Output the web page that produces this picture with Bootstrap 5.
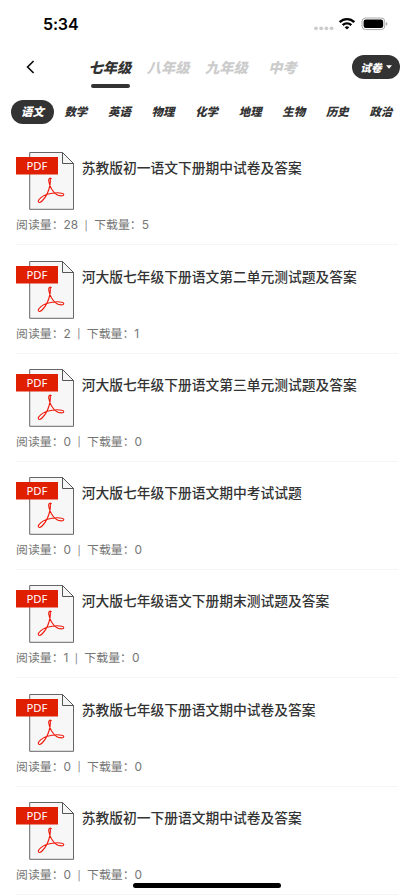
<!DOCTYPE html>
<html lang="zh-CN">
<head>
<meta charset="utf-8">
<meta name="viewport" content="width=device-width, initial-scale=1">
<title>试卷</title>
<link href="https://cdn.jsdelivr.net/npm/bootstrap@5.3.0/dist/css/bootstrap.min.css" rel="stylesheet">
<style>
body{font-family:Inter,"Noto Sans CJK SC",sans-serif;color:#333;background:#fff;overflow:hidden}
.screen{width:414px;height:896px}
.statusbar{height:47px;padding:0 25.5px 0 43px;color:#000}
.clock{font-size:16px;font-weight:600;line-height:47px;letter-spacing:-.15px;padding-top:1px}
.topbar{height:40px;padding:0 14px 0 25px}
.slanted{font-family:"Noto Sans CJK SC",sans-serif;font-weight:900;font-style:italic;white-space:nowrap}
.grades{margin-left:51.5px;gap:15.7px;font-size:14.2px;line-height:20px;color:#ccc}
.grades .current{color:#333}
.grades .current::after{content:"";position:absolute;left:2.5px;top:27px;width:38.5px;height:4px;border-radius:2px;background:#333}
.exam{margin-left:5px}
.kind{width:48px;height:24px;background:#333;font-size:10.8px}
.subjects{height:50px;padding-left:11px;font-size:11.4px;color:#333}
.subject{width:43.6px;flex:none}
.subject.current{width:43px;height:24px;background:#333;color:#fff}
.paper{height:108.3px;padding:15.3px 0 0;margin:0 16px;border-bottom:1px solid #f5f5f5}
.paper-title{font-family:"Noto Sans CJK SC",sans-serif;font-size:13.75px;font-weight:500;line-height:20px;margin:5px 0 0 7.8px;color:#333;white-space:nowrap}
.meta{font-size:11.9px;line-height:18px;margin-top:6px;color:#757575;white-space:pre}
.bar{font-size:9.5px;position:relative;top:-.5px;margin:0 -.3px}
.home{width:148px;height:5px;border-radius:3px;background:#000;bottom:8px;left:133px}
</style>
</head>
<body>
<svg class="d-none">
<symbol id="pdf" viewBox="0 0 58 58">
<path d="M13.7.5h32.8l11 11v45.8H13.7z" fill="#f7f7f8" stroke="#666" stroke-width="1"/>
<path d="M46.5.5v11h11z" fill="#f5f5f5" stroke="#555" stroke-width="1" stroke-linejoin="round"/>
<path d="M0 5h42v17.6H0z" fill="#e01e00"/>
<text x="10.4" y="17.8" font-family="Noto Sans, sans-serif" font-size="11.6" textLength="21" lengthAdjust="spacingAndGlyphs" fill="#fff">PDF</text>
<path d="M35.3 26.6c-1.4-1.1-2.9-.3-2.6 2.2.3 3.1 1.5 5.7 2.9 8.2 2.6 4.4 6.2 6.9 9.8 6.9 3-.1 3.2-2.2.4-2.7-3.8-.7-10.6-.1-15.3 1.3-4.4 1.5-8.5 5-8.2 7 .3 1.6 2.3 1.1 3.8-.5 3.7-3.8 7-11 8-16.7.4-2.3.3-4.4.1-5.8" fill="none" stroke="#ef1b0b" stroke-width="1.15" stroke-linecap="round" stroke-linejoin="round"/>
</symbol>
</svg>
<main class="screen position-relative overflow-hidden">
<header class="statusbar d-flex align-items-center justify-content-between">
<span class="clock">5:34</span>
<svg width="76" height="16" viewBox="0 0 76 16">
<g fill="#ccc"><circle cx="3" cy="12.3" r="1.9"/><circle cx="8.2" cy="12.3" r="1.9"/><circle cx="13.4" cy="12.3" r="1.9"/><circle cx="18.6" cy="12.3" r="1.9"/></g>
<g fill="none" stroke="#000" stroke-width="2.4"><path d="M26.7 6.1a10.4 10.4 0 0 1 14.6 0"/><path d="M29.7 9.1a6.1 6.1 0 0 1 8.6 0"/></g>
<path d="M34 13.5l-2.3-2.3a3.4 3.4 0 0 1 4.6 0z"/>
<rect x="49" y="2" width="22.8" height="11.6" rx="3.6" fill="none" stroke="#aaa"/>
<rect x="50.6" y="3.6" width="19.6" height="8.4" rx="2.2"/>
<path d="M73 6v3.8c1.8-.6 1.8-3.2 0-3.8z" fill="#aaa"/>
</svg>
</header>
<nav class="topbar d-flex align-items-center">
<svg width="12" height="16" viewBox="0 0 12 16" fill="none" stroke="#111" stroke-width="1.7"><path d="M8.6 2L2.6 8l6 6"/></svg>
<div class="grades slanted d-flex"><span class="current position-relative">七年级</span><span>八年级</span><span>九年级</span><span class="exam">中考</span></div>
<div class="kind slanted ms-auto rounded-pill d-flex align-items-center justify-content-center text-white">试卷<svg class="ms-1" width="6" height="4" viewBox="0 0 6 4" fill="#fff"><path d="M0 .3h6L3 3.7z"/></svg></div>
</nav>
<nav class="subjects slanted d-flex align-items-center text-center">
<span class="subject current rounded-pill d-flex align-items-center justify-content-center">语文</span><span class="subject">数学</span><span class="subject">英语</span><span class="subject">物理</span><span class="subject">化学</span><span class="subject">地理</span><span class="subject">生物</span><span class="subject">历史</span><span class="subject">政治</span>
</nav>
<section>
<article class="paper"><div class="d-flex"><svg width="58" height="58"><use href="#pdf"/></svg><h2 class="paper-title">苏教版初一语文下册期中试卷及答案</h2></div><div class="meta">阅读量：28  <span class="bar">|</span>  下载量：5</div></article>
<article class="paper"><div class="d-flex"><svg width="58" height="58"><use href="#pdf"/></svg><h2 class="paper-title">河大版七年级下册语文第二单元测试题及答案</h2></div><div class="meta">阅读量：2  <span class="bar">|</span>  下载量：1</div></article>
<article class="paper"><div class="d-flex"><svg width="58" height="58"><use href="#pdf"/></svg><h2 class="paper-title">河大版七年级下册语文第三单元测试题及答案</h2></div><div class="meta">阅读量：0  <span class="bar">|</span>  下载量：0</div></article>
<article class="paper"><div class="d-flex"><svg width="58" height="58"><use href="#pdf"/></svg><h2 class="paper-title">河大版七年级下册语文期中考试试题</h2></div><div class="meta">阅读量：0  <span class="bar">|</span>  下载量：0</div></article>
<article class="paper"><div class="d-flex"><svg width="58" height="58"><use href="#pdf"/></svg><h2 class="paper-title">河大版七年级语文下册期末测试题及答案</h2></div><div class="meta">阅读量：1  <span class="bar">|</span>  下载量：0</div></article>
<article class="paper"><div class="d-flex"><svg width="58" height="58"><use href="#pdf"/></svg><h2 class="paper-title">苏教版七年级下册语文期中试卷及答案</h2></div><div class="meta">阅读量：0  <span class="bar">|</span>  下载量：0</div></article>
<article class="paper"><div class="d-flex"><svg width="58" height="58"><use href="#pdf"/></svg><h2 class="paper-title">苏教版初一下册语文期中试卷及答案</h2></div><div class="meta">阅读量：0  <span class="bar">|</span>  下载量：0</div></article>
</section>
<div class="home position-absolute"></div>
</main>
<script src="https://cdn.jsdelivr.net/npm/bootstrap@5.3.0/dist/js/bootstrap.bundle.min.js"></script>
</body>
</html>
